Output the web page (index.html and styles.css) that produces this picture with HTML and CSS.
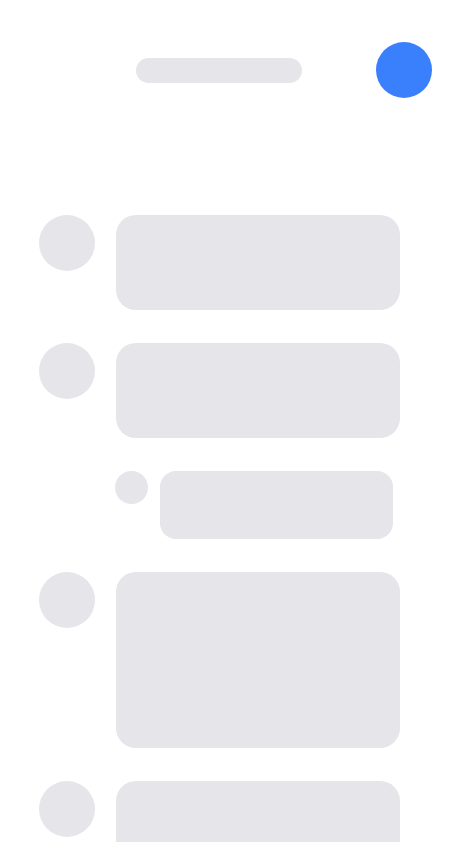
FILE: index.html
```html
<!DOCTYPE html>
<html lang="en">
<head>
<meta charset="utf-8">
<title>Loading</title>
<link rel="stylesheet" href="styles.css">
</head>
<body>
<div class="screen">
  <header class="header">
    <div class="pill"></div>
    <div class="me"></div>
  </header>
  <main class="feed">
    <div class="row">
      <div class="avatar"></div>
      <div class="bubble h95"></div>
    </div>
    <div class="row">
      <div class="avatar"></div>
      <div class="bubble h95"></div>
    </div>
    <div class="row reply">
      <div class="avatar small"></div>
      <div class="bubble small-bubble"></div>
    </div>
    <div class="row">
      <div class="avatar"></div>
      <div class="bubble h176"></div>
    </div>
    <div class="row">
      <div class="avatar"></div>
      <div class="bubble h176"></div>
    </div>
  </main>
</div>
</body>
</html>
```
FILE: styles.css
```css
html, body {
  margin: 0;
  padding: 0;
  background: #ffffff;
  font-family: "Liberation Sans", Arial, sans-serif;
}
.screen {
  width: 475px;
  height: 842px;
  overflow: hidden;
}
.header {
  display: flex;
  align-items: center;
  padding: 42px 43px 0 136px;
  height: 56px;
}
.pill {
  width: 166px;
  height: 25px;
  border-radius: 12.5px;
  background: #e5e5ea;
}
.me {
  width: 56px;
  height: 56px;
  border-radius: 50%;
  background: #3a80fd;
  margin-left: auto;
}
.feed {
  margin-top: 117px;
  padding-left: 39px;
  display: flex;
  flex-direction: column;
  gap: 33px;
}
.row {
  display: flex;
  align-items: flex-start;
  gap: 21px;
}
.avatar {
  width: 56px;
  height: 56px;
  border-radius: 50%;
  background: #e5e5ea;
  flex: none;
}
.bubble {
  width: 284px;
  border-radius: 20px;
  background: #e5e5ea;
}
.h95 { height: 95px; }
.h176 { height: 176px; }
.reply {
  padding-left: 76px;
  gap: 12px;
}
.avatar.small {
  width: 33px;
  height: 33px;
}
.small-bubble {
  width: 233px;
  height: 68px;
  border-radius: 16px;
}
```
